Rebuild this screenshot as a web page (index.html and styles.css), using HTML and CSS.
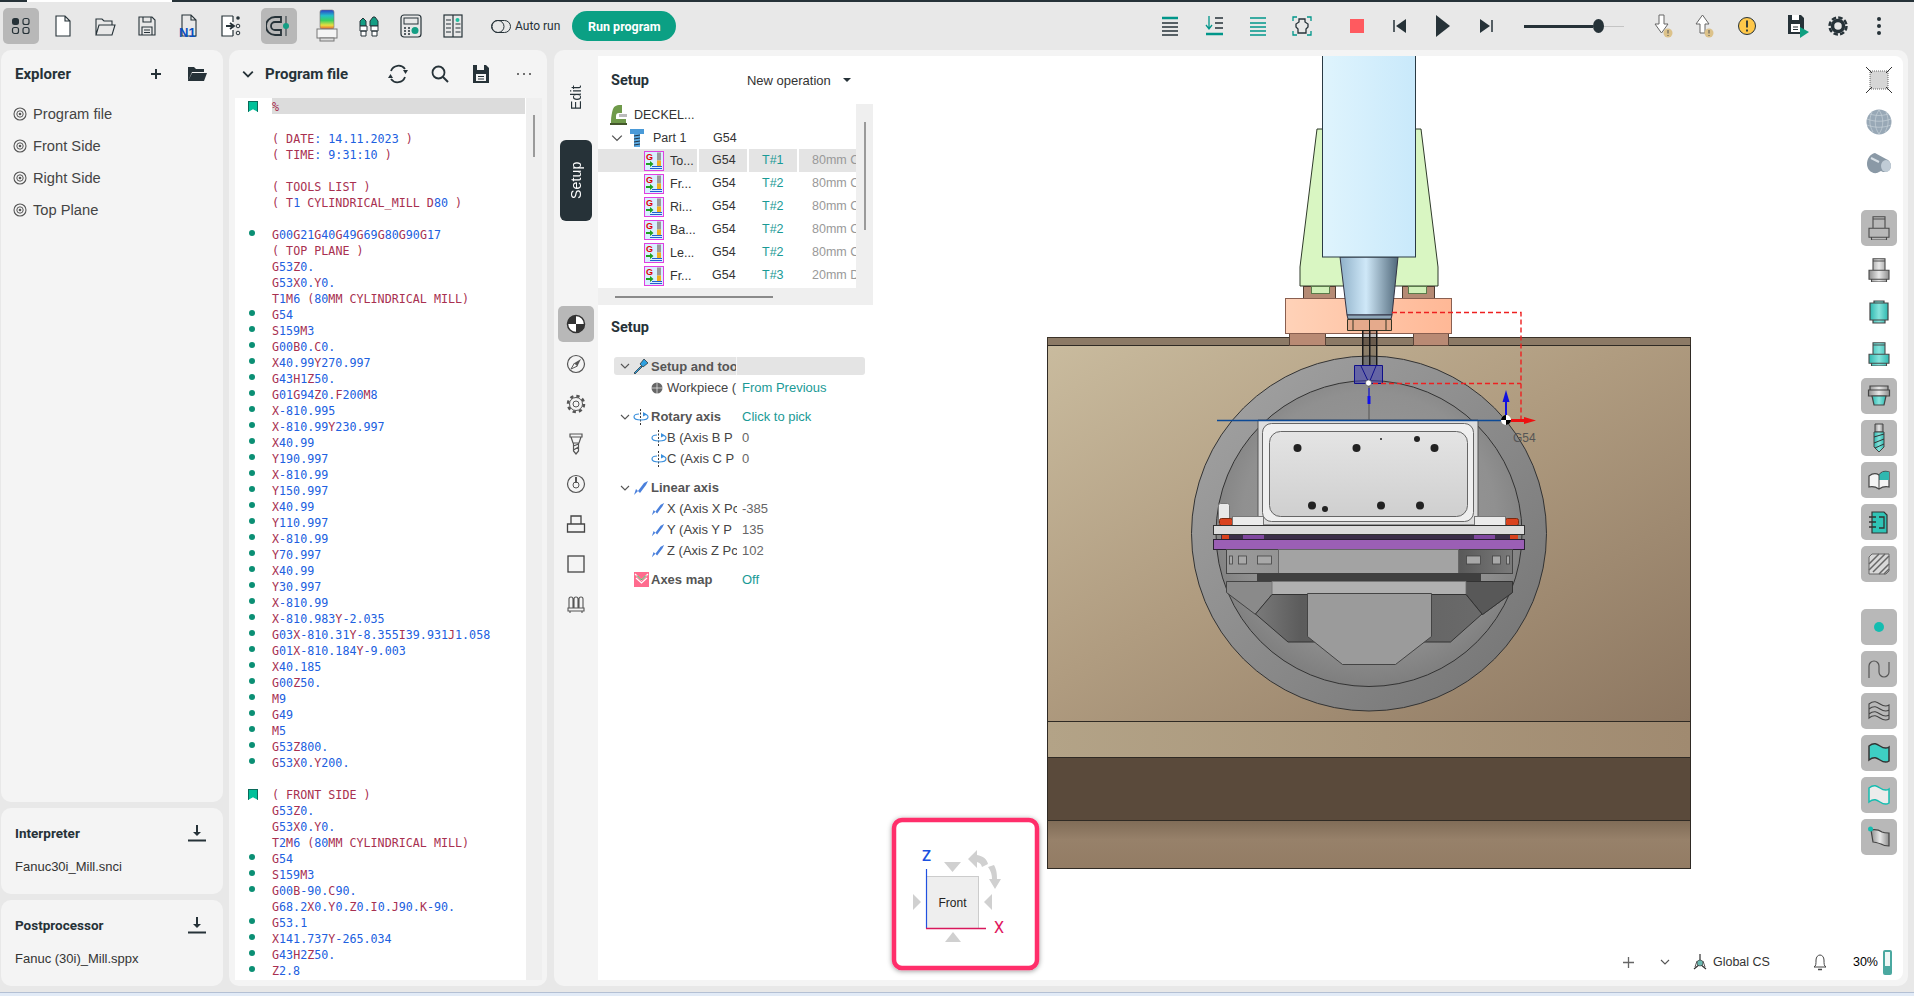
FILE: index.html
```html
<!DOCTYPE html>
<html lang="en">
<head>
<meta charset="utf-8">
<title>Setup</title>
<link rel="stylesheet" href="styles.css">
</head>
<body>
<svg class="defs" width="0" height="0" aria-hidden="true">
  <defs>
    <linearGradient id="gMetal" x1="0" x2="1" y1="0" y2="0"><stop offset="0" stop-color="#8f8f8f"/><stop offset=".5" stop-color="#e8e8e8"/><stop offset="1" stop-color="#8f8f8f"/></linearGradient>
    <linearGradient id="gTeal" x1="0" x2="1" y1="0" y2="0"><stop offset="0" stop-color="#2fb8b0"/><stop offset=".5" stop-color="#86e4dc"/><stop offset="1" stop-color="#2fb8b0"/></linearGradient>
    <linearGradient id="gRainbow" x1="0" x2="0" y1="0" y2="1"><stop offset="0" stop-color="#2a3fc8"/><stop offset=".3" stop-color="#24c0c8"/><stop offset=".55" stop-color="#3ad060"/><stop offset=".8" stop-color="#e8e040"/><stop offset="1" stop-color="#e86030"/></linearGradient>
    <symbol id="stage" viewBox="0 0 24 24"><path d="M6 .7h12v11.600H6zM6 3h12M2 12.300h20v9H2zM4.500 21.300h15V24h-15z" stroke="#4a4a4a" stroke-width="1.100"/></symbol>
    <symbol id="stagebig" viewBox="0 0 24 24"><path d="M7 1h10v2H7zM3 3h18v17H3zM6 20h12v3H6z" stroke="#444" stroke-width="1.200"/></symbol>
    <symbol id="wave" viewBox="0 0 24 24"><path d="M2 5c5-4 8-2 11 0s6 3 9 1v14c-3 2-6 1-9-1s-6-4-11 0z" stroke-width="1.500"/></symbol>
    <symbol id="op" viewBox="0 0 20 20">
      <rect x=".5" y=".5" width="19" height="19" fill="#d8efff" stroke="#e040e0"/>
      <text x="2" y="9" class="op-g">G</text>
      <path d="M2 12h4v-2l3.500 3-3.500 3v-2H2z" fill="#20a020"/>
      <path d="M13 1.500h4v8h-4z" fill="#999"/><path d="M13 9.500h4v6h-4z" fill="#f0b020"/>
      <path d="M8 15.500h10M6 17.500h12" stroke="#2060d0"/>
    </symbol>
    <symbol id="linear" viewBox="0 0 16 16"><path d="M1 15l2-6 2 2 6-8 4-2-2 4-6 8-2-2z" fill="#4a80dc"/></symbol>
    <symbol id="rotary" viewBox="0 0 16 16"><path d="M7.500 0v16" stroke="#333" stroke-dasharray="2 1.500" fill="none"/><path d="M11 5c3 .5 4 2 4 3 0 2-3 3-7 3s-7-1-7-3 2-3 5-3" fill="none" stroke="#3a8fdc" stroke-width="1.200"/><path d="M10 3l4 2.500-4 2z" fill="#3a8fdc"/></symbol>
    <symbol id="eye" viewBox="0 0 14 14"><circle cx="7" cy="7" r="6" fill="none" stroke="#555" stroke-width="1.100"/><circle cx="7" cy="7" r="3.200" fill="none" stroke="#555" stroke-width="1"/><circle cx="7" cy="7" r="1.300" fill="#555"/></symbol>
    <symbol id="download" viewBox="0 0 18 18"><path d="M8 1h2v7h3l-4 4-4-4h3z" fill="#263238"/><path d="M0 16.500h18" stroke="#263238" stroke-width="2"/></symbol>
    <symbol id="chev" viewBox="0 0 10 10"><path d="M1 3l4 4 4-4" fill="none" stroke="#555" stroke-width="1.100"/></symbol>
  </defs>
</svg>

<div class="topline"><span class="tl-a"></span><span class="tl-b"></span><span class="tl-c"></span></div>

<header class="toolbar">
  <div class="tb-btn on"><svg width="20" height="20" viewBox="0 0 20 20"><rect x="1" y="2" width="7" height="7" rx="2.500" fill="#263238"/><rect x="12" y="2.500" width="6" height="6" rx="2" fill="none" stroke="#263238" stroke-width="1.200"/><rect x="1.500" y="11.500" width="6" height="6" rx="2" fill="none" stroke="#263238" stroke-width="1.200"/><rect x="12" y="11.500" width="6" height="6" rx="2" fill="none" stroke="#263238" stroke-width="1.200"/></svg></div>
  <div class="tb-btn"><svg width="24" height="24" viewBox="0 0 24 24"><path d="M5 2h9l5 5v15H5zM14 2v5h5" fill="#fff" stroke="#263238" stroke-width="1.100"/></svg></div>
  <div class="tb-btn"><svg width="24" height="24" viewBox="0 0 24 24"><path d="M3 21V5h6l2 2h8v4M3 21l3-10h16l-3 10z" fill="none" stroke="#263238" stroke-width="1.100"/></svg></div>
  <div class="tb-btn"><svg width="24" height="24" viewBox="0 0 24 24"><path d="M4 3h13l3 3v15H4zM8 3v5h8V3M7 13h10v8H7zM9 16h6M9 18.500h6" fill="none" stroke="#263238" stroke-width="1.100"/></svg></div>
  <div class="tb-btn"><svg width="26" height="26" viewBox="0 0 26 26"><path d="M6 2h9l5 5v16H6zM15 2v5h5" fill="none" stroke="#263238" stroke-width="1.100"/><text x="3" y="24" class="n1">N1</text></svg></div>
  <div class="tb-btn"><svg width="26" height="26" viewBox="0 0 26 26"><path d="M15 3H4v20h11M15 3v6M15 17v6" fill="#fff" stroke="#263238" stroke-width="1.200"/><path d="M8 13h7M12 10l4 3-4 3" fill="none" stroke="#263238" stroke-width="1.800"/><circle cx="20" cy="5" r="1.800" fill="#263238"/><circle cx="20" cy="13" r="1.800" fill="none" stroke="#263238"/><circle cx="20" cy="20" r="1.800" fill="none" stroke="#263238"/></svg></div>
  <div class="tb-btn on gap-l"><svg width="26" height="26" viewBox="0 0 26 26"><path d="M15 4H9a9 9 0 0 0 0 18h6v-5H9a4 4 0 0 1 0-8h6z" fill="none" stroke="#263238" stroke-width="1.800"/><path d="M20 3v20" stroke="#263238"/><circle cx="20" cy="13" r="3" fill="#149e84"/></svg></div>
  <div class="tb-btn gap-l"><svg width="24" height="34" viewBox="0 0 24 34"><rect x="5" y="1" width="14" height="19" rx="2" fill="url(#gRainbow)" stroke="#777" stroke-width=".6"/><rect x="2" y="20" width="20" height="9" fill="#f4f4f4" stroke="#777"/><rect x="5" y="29" width="14" height="3" fill="#ddd" stroke="#777"/></svg></div>
  <div class="tb-btn"><svg width="24" height="24" viewBox="0 0 24 24"><path d="M3 7l3-3 3 3v5H3zM13 7l3-4h2l3 4v5h-8z" fill="#149e84" stroke="#263238"/><path d="M3 12h7v5H3zM14 12h7v5h-7zM4 17h5v5H4zM15 17h5v5h-5z" fill="#fff" stroke="#263238"/></svg></div>
  <div class="tb-btn"><svg width="26" height="26" viewBox="0 0 26 26"><rect x="3" y="2" width="20" height="22" rx="3" fill="none" stroke="#263238" stroke-width="1.200"/><rect x="6" y="5" width="14" height="6" fill="none" stroke="#263238"/><circle cx="17" cy="17.500" r="3.500" fill="#149e84"/><path d="M6 15h2M10 15h2M6 18h2M10 18h2M6 21h2M10 21h2" stroke="#263238" stroke-width="1.500"/></svg></div>
  <div class="tb-btn"><svg width="24" height="26" viewBox="0 0 24 26"><rect x="3" y="2" width="18" height="22" fill="none" stroke="#263238" stroke-width="1.200"/><path d="M12 2v22M5 7h5M5 11h5M5 15h5M5 19h5M14.500 11h5M14.500 15h5M14.500 19h5" stroke="#263238" stroke-width="1.200"/><circle cx="16.500" cy="7" r="2" fill="#1fc0a0"/></svg></div>
  <div class="autorun"><svg width="20" height="13" viewBox="0 0 20 13"><rect x=".5" y=".5" width="19" height="12" rx="6" fill="none" stroke="#263238"/><circle cx="7" cy="6.500" r="6" fill="none" stroke="#263238"/></svg><span>Auto run</span></div>
  <div class="run">Run program</div>

  <div class="tb-right">
    <div class="tb-group g44">
      <svg width="24" height="24" viewBox="0 0 24 24"><path d="M4 4h16" stroke="#00968a" stroke-width="2.500"/><path d="M4 9h16M4 13h16M4 17h16M4 21h16" stroke="#263238" stroke-width="1.300"/></svg>
      <svg width="24" height="24" viewBox="0 0 24 24"><path d="M7 2v12M4 11l3 4 3-4" fill="none" stroke="#00968a" stroke-width="1.300"/><path d="M13 4h8M13 9h8M13 14h8" stroke="#263238" stroke-width="1.300"/><path d="M4 20h17" stroke="#00968a" stroke-width="2.500"/></svg>
      <svg width="24" height="24" viewBox="0 0 24 24"><path d="M4 4h16M4 9h16M4 13h16M4 17h16M4 21h16" stroke="#00968a" stroke-width="1.500"/></svg>
      <svg width="24" height="24" viewBox="0 0 24 24"><path d="M3 7V3h4M17 3h4v4M21 17v4h-4M7 21H3v-4" fill="none" stroke="#00968a" stroke-width="1.300"/><path d="M9 5h6v3l3 2v3l-2 2v4H8v-4l-2-2v-3l3-2z" fill="none" stroke="#263238" stroke-width="1.300"/></svg>
    </div>
    <div class="tb-group g19 play-group">
      <svg width="24" height="24" viewBox="0 0 24 24"><rect x="5" y="5" width="14" height="14" fill="#ff5a5f"/></svg>
      <svg width="24" height="24" viewBox="0 0 24 24"><path d="M6 6v12" stroke="#263238" stroke-width="1.500"/><path d="M18 5v14L8 12z" fill="#263238"/></svg>
      <svg width="24" height="24" viewBox="0 0 24 24"><path d="M5 1v22l14-11z" fill="#263238"/></svg>
      <svg width="24" height="24" viewBox="0 0 24 24"><path d="M18 6v12" stroke="#263238" stroke-width="1.500"/><path d="M6 5v14l10-7z" fill="#263238"/></svg>
    </div>
    <div class="slider"><i class="sl-fill"></i><i class="sl-knob"></i><i class="sl-rest"></i></div>
    <div class="tb-group g17 alerts">
      <svg width="24" height="26" viewBox="0 0 24 26"><path d="M8 2h5v9h4l-6.500 9L4 11h4z" fill="#fff" stroke="#666"/><circle cx="17" cy="20" r="4.500" fill="#dcc28a"/><path d="M17 17v3.500M17 22v1" stroke="#555"/></svg>
      <svg width="24" height="26" viewBox="0 0 24 26"><path d="M8 20h5v-9h4L10.500 2 4 11h4z" fill="#fff" stroke="#666"/><circle cx="17" cy="20" r="4.500" fill="#dcc28a"/><path d="M17 17v3.500M17 22v1" stroke="#555"/></svg>
    </div>
    <svg class="warn" width="24" height="24" viewBox="0 0 24 24"><ellipse cx="12" cy="12" rx="8.500" ry="8.500" fill="#ffc84a" stroke="#263238"/><path d="M12 6.500v7M12 15.500v2" stroke="#263238" stroke-width="1.800"/></svg>
    <div class="tb-group g17 sys">
      <svg width="24" height="26" viewBox="0 0 24 26"><path d="M3 2h13l3 3v16H3z" fill="#263238"/><path d="M7 2h7v5H7zM6 11h9v8H6z" fill="#fff"/><path d="M8 14h5M8 16.500h5" stroke="#263238"/><path d="M15 14l9 5-9 6z" fill="#0f9f80"/></svg>
      <svg width="24" height="24" viewBox="0 0 24 24"><circle cx="12" cy="12" r="5.500" fill="none" stroke="#263238" stroke-width="3.500"/><circle cx="12" cy="12" r="8.500" fill="none" stroke="#263238" stroke-width="2.500" stroke-dasharray="4.500 2.170"/></svg>
      <svg width="24" height="24" viewBox="0 0 24 24"><circle cx="12" cy="5" r="2" fill="#263238"/><circle cx="12" cy="12" r="2" fill="#263238"/><circle cx="12" cy="19" r="2" fill="#263238"/></svg>
    </div>
  </div>
</header>

<main class="main">
  <div class="left-col">
    <section class="panel explorer">
      <div class="explorer-head"><h2 class="title">Explorer</h2>
        <svg class="plus" width="12" height="12" viewBox="0 0 12 12"><path d="M6 1v10M1 6h10" stroke="#263238" stroke-width="2"/></svg>
        <svg class="folder" width="20" height="16" viewBox="0 0 20 16"><path d="M1 15V1h6l2 2h8v3H5zM1 15l4-8h15l-3 8z" fill="#263238"/></svg>
      </div>
      <ul class="ex-list">
        <li><svg width="14" height="14"><use href="#eye"/></svg>Program file</li>
        <li><svg width="14" height="14"><use href="#eye"/></svg>Front Side</li>
        <li><svg width="14" height="14"><use href="#eye"/></svg>Right Side</li>
        <li><svg width="14" height="14"><use href="#eye"/></svg>Top Plane</li>
      </ul>
    </section>
    <section class="panel side-card">
      <div class="card-head"><h3 class="title small">Interpreter</h3><svg width="18" height="18"><use href="#download"/></svg></div>
      <div class="card-val">Fanuc30i_Mill.snci</div>
    </section>
    <section class="panel side-card">
      <div class="card-head"><h3 class="title small">Postprocessor</h3><svg width="18" height="18"><use href="#download"/></svg></div>
      <div class="card-val">Fanuc (30i)_Mill.sppx</div>
    </section>
  </div>

  <section class="panel program">
    <div class="prog-head">
      <svg class="prog-chev" width="12" height="12" viewBox="0 0 10 10"><path d="M1 3l4 4 4-4" fill="none" stroke="#263238" stroke-width="1.500"/></svg>
      <h2 class="title">Program file</h2>
      <svg class="pi-1" width="22" height="22" viewBox="0 0 22 22"><path d="M4 8a8 8 0 0 1 14-2M18 14a8 8 0 0 1-14 2" fill="none" stroke="#263238" stroke-width="1.800"/><path d="M16 7h5l-2.500 4zM6 15H1l2.500-4z" fill="#263238"/></svg>
      <svg class="pi-2" width="20" height="20" viewBox="0 0 20 20"><circle cx="8.500" cy="8.500" r="6" fill="none" stroke="#263238" stroke-width="1.800"/><path d="M13 13l5 5" stroke="#263238" stroke-width="2"/></svg>
      <svg class="pi-3" width="18" height="20" viewBox="0 0 18 20"><path d="M1 1h13l3 3v15H1z" fill="#263238"/><path d="M5 1h7v5H5zM4 10h10v7H4z" fill="#f4f4f4"/><path d="M6 12.500h6M6 15h6" stroke="#263238"/></svg>
      <svg class="pi-4" width="16" height="4" viewBox="0 0 16 4"><circle cx="2" cy="2" r="1" fill="#444"/><circle cx="8" cy="2" r="1" fill="#444"/><circle cx="14" cy="2" r="1" fill="#444"/></svg>
    </div>
    <div class="code-wrap">
      <div class="code" id="code">
        <div class="ln hl bm"><code>%</code></div>
        <div class="ln"><code></code></div>
        <div class="ln"><code>( DATE: 14.11.2023 )</code></div>
        <div class="ln"><code>( TIME: 9:31:10 )</code></div>
        <div class="ln"><code></code></div>
        <div class="ln"><code>( TOOLS LIST )</code></div>
        <div class="ln"><code>( T1 CYLINDRICAL_MILL D80 )</code></div>
        <div class="ln"><code></code></div>
        <div class="ln dot"><code>G00G21G40G49G69G80G90G17</code></div>
        <div class="ln"><code>( TOP PLANE )</code></div>
        <div class="ln"><code>G53Z0.</code></div>
        <div class="ln"><code>G53X0.Y0.</code></div>
        <div class="ln"><code>T1M6 (80MM CYLINDRICAL MILL)</code></div>
        <div class="ln dot"><code>G54</code></div>
        <div class="ln dot"><code>S159M3</code></div>
        <div class="ln dot"><code>G00B0.C0.</code></div>
        <div class="ln dot"><code>X40.99Y270.997</code></div>
        <div class="ln dot"><code>G43H1Z50.</code></div>
        <div class="ln dot"><code>G01G94Z0.F200M8</code></div>
        <div class="ln dot"><code>X-810.995</code></div>
        <div class="ln dot"><code>X-810.99Y230.997</code></div>
        <div class="ln dot"><code>X40.99</code></div>
        <div class="ln dot"><code>Y190.997</code></div>
        <div class="ln dot"><code>X-810.99</code></div>
        <div class="ln dot"><code>Y150.997</code></div>
        <div class="ln dot"><code>X40.99</code></div>
        <div class="ln dot"><code>Y110.997</code></div>
        <div class="ln dot"><code>X-810.99</code></div>
        <div class="ln dot"><code>Y70.997</code></div>
        <div class="ln dot"><code>X40.99</code></div>
        <div class="ln dot"><code>Y30.997</code></div>
        <div class="ln dot"><code>X-810.99</code></div>
        <div class="ln dot"><code>X-810.983Y-2.035</code></div>
        <div class="ln dot"><code>G03X-810.31Y-8.355I39.931J1.058</code></div>
        <div class="ln dot"><code>G01X-810.184Y-9.003</code></div>
        <div class="ln dot"><code>X40.185</code></div>
        <div class="ln dot"><code>G00Z50.</code></div>
        <div class="ln dot"><code>M9</code></div>
        <div class="ln dot"><code>G49</code></div>
        <div class="ln dot"><code>M5</code></div>
        <div class="ln dot"><code>G53Z800.</code></div>
        <div class="ln dot"><code>G53X0.Y200.</code></div>
        <div class="ln"><code></code></div>
        <div class="ln bm"><code>( FRONT SIDE )</code></div>
        <div class="ln"><code>G53Z0.</code></div>
        <div class="ln"><code>G53X0.Y0.</code></div>
        <div class="ln"><code>T2M6 (80MM CYLINDRICAL MILL)</code></div>
        <div class="ln dot"><code>G54</code></div>
        <div class="ln dot"><code>S159M3</code></div>
        <div class="ln dot"><code>G00B-90.C90.</code></div>
        <div class="ln"><code>G68.2X0.Y0.Z0.I0.J90.K-90.</code></div>
        <div class="ln dot"><code>G53.1</code></div>
        <div class="ln dot"><code>X141.737Y-265.034</code></div>
        <div class="ln dot"><code>G43H2Z50.</code></div>
        <div class="ln dot"><code>Z2.8</code></div>
      </div>
      <div class="code-track"><i class="code-thumb"></i></div>
    </div>
  </section>

  <section class="panel setup">
    <nav class="rail">
      <div class="rail-tab">Edit</div>
      <div class="rail-tab active">Setup</div>
      <div class="rail-icons">
        <div class="rail-ic on"><svg width="20" height="20" viewBox="0 0 20 20"><circle cx="10" cy="10" r="8.500" fill="#fff" stroke="#333" stroke-width="1.500"/><path d="M10 10V1.500A8.500 8.500 0 0 0 1.500 10zM10 10v8.500a8.500 8.500 0 0 0 8.500-8.500z" fill="#333"/></svg></div>
        <div class="rail-ic"><svg width="20" height="20" viewBox="0 0 20 20"><circle cx="10" cy="10" r="8.500" fill="none" stroke="#555" stroke-width="1.200"/><path d="M15 5l-3.500 7-3 -3z" fill="#555"/><path d="M5 15l3.500-6 3 3z" fill="none" stroke="#555"/></svg></div>
        <div class="rail-ic"><svg width="20" height="20" viewBox="0 0 20 20"><circle cx="10" cy="10" r="3" fill="none" stroke="#555"/><circle cx="10" cy="10" r="6.500" fill="none" stroke="#555"/><circle cx="10" cy="10" r="8" fill="none" stroke="#555" stroke-width="2.500" stroke-dasharray="3.300 3"/></svg></div>
        <div class="rail-ic"><svg width="16" height="22" viewBox="0 0 16 22"><path d="M2 1h12v3H2zM3 4h10l-2 6H5zM5.500 10h5v8l-2.500 3-2.500-3zM5.500 13l5-2M5.500 17l5-3" fill="none" stroke="#555" stroke-width="1.200"/></svg></div>
        <div class="rail-ic"><svg width="20" height="20" viewBox="0 0 20 20"><circle cx="10" cy="10" r="8.500" fill="none" stroke="#555" stroke-width="1.200"/><circle cx="10" cy="11" r="3" fill="none" stroke="#555"/><path d="M9 9V3h2v6" fill="#555"/></svg></div>
        <div class="rail-ic"><svg width="20" height="20" viewBox="0 0 20 20"><path d="M5 2h10v8H5zM1.500 10h17v8h-17z" fill="none" stroke="#444" stroke-width="1.300"/></svg></div>
        <div class="rail-ic"><svg width="20" height="20" viewBox="0 0 20 20"><rect x="2" y="2" width="16" height="16" fill="none" stroke="#444" stroke-width="1.300"/></svg></div>
        <div class="rail-ic"><svg width="20" height="20" viewBox="0 0 20 20"><path d="M3 5a2 2 0 0 1 4 0v9H3zM8 5a2 2 0 0 1 4 0v9H8zM13 5a2 2 0 0 1 4 0v9h-4zM2 14h16v3H2zM4 17v2M16 17v2" fill="none" stroke="#555" stroke-width="1.100"/></svg></div>
      </div>
    </nav>
    <div class="work">
      <div class="form-col">
        <div class="form-head"><h3 class="title setup-t">Setup</h3><span class="newop">New operation</span><i class="caret"></i></div>
        <div class="tree-box">
          <div class="tree-body">
            <div class="tree">
              <div class="t-row machine"><svg width="17" height="20" viewBox="0 0 17 20"><path d="M1 19V16c0-4 1-9 2-12 1-3 4-4 6-4h3v8H9c-2 0-3 1-3 3v3h10v5H1z" fill="#6f9a4a"/><rect x="9" y="9" width="8" height="3" fill="#bbb"/><rect x="0" y="18" width="17" height="2" fill="#44572c"/></svg><span>DECKEL...</span></div>
              <div class="t-row part">
                <svg width="12" height="12"><use href="#chev"/></svg>
                <svg width="14" height="20" viewBox="0 0 14 20"><path d="M0 1h14v5H0z" fill="#4a9ad8"/><path d="M4 6h6v13H4z" fill="#5aa8e0"/><path d="M4 8l6-1M4 11l6-1M4 14l6-1M4 17l6-1" stroke="#234"/></svg>
                <span class="p-name">Part 1</span><span class="p-g">G54</span>
              </div>
              <div class="op sel"><div class="c-name"><svg width="20" height="20"><use href="#op"/></svg><span>To...</span></div><div class="c">G54</div><div class="c teal">T#1</div><div class="c gray">80mm C</div></div>
              <div class="op"><div class="c-name"><svg width="20" height="20"><use href="#op"/></svg><span>Fr...</span></div><div class="c">G54</div><div class="c teal">T#2</div><div class="c gray">80mm C</div></div>
              <div class="op"><div class="c-name"><svg width="20" height="20"><use href="#op"/></svg><span>Ri...</span></div><div class="c">G54</div><div class="c teal">T#2</div><div class="c gray">80mm C</div></div>
              <div class="op"><div class="c-name"><svg width="20" height="20"><use href="#op"/></svg><span>Ba...</span></div><div class="c">G54</div><div class="c teal">T#2</div><div class="c gray">80mm C</div></div>
              <div class="op"><div class="c-name"><svg width="20" height="20"><use href="#op"/></svg><span>Le...</span></div><div class="c">G54</div><div class="c teal">T#2</div><div class="c gray">80mm C</div></div>
              <div class="op"><div class="c-name"><svg width="20" height="20"><use href="#op"/></svg><span>Fr...</span></div><div class="c">G54</div><div class="c teal">T#3</div><div class="c gray">20mm D</div></div>
            </div>
            <div class="v-track"><i class="v-thumb"></i></div>
          </div>
          <div class="h-track"><i class="h-thumb"></i></div>
        </div>
        <h3 class="title setup-t props-t">Setup</h3>
        <div class="props">
          <div class="p-row head sel-row"><div class="p-n"><svg width="10" height="10"><use href="#chev"/></svg><svg class="p-ic" width="16" height="16" viewBox="0 0 16 16"><path d="M1 15l7-7 1 1-7 7z" fill="#2ea0e0" stroke="#111" stroke-width=".6"/><path d="M7 6l4-5 4 4-5 4z" fill="#2ea0e0" stroke="#111" stroke-width=".6"/></svg><span>Setup and too</span></div><div class="p-v"></div></div>
          <div class="p-row child wp"><div class="p-n"><svg class="p-ic" width="12" height="12" viewBox="0 0 12 12"><circle cx="6" cy="6" r="5.500" fill="#666"/><path d="M6 0v12M0 6h12" stroke="#eee" stroke-width=".7"/></svg><span>Workpiece (</span></div><div class="p-v teal">From Previous</div></div>
          <div class="p-row head sp"><div class="p-n"><svg width="10" height="10"><use href="#chev"/></svg><svg class="p-ic" width="16" height="16"><use href="#rotary"/></svg><span>Rotary axis</span></div><div class="p-v teal">Click to pick</div></div>
          <div class="p-row child rot"><div class="p-n"><svg class="p-ic" width="16" height="16"><use href="#rotary"/></svg><span>B (Axis B P</span></div><div class="p-v">0</div></div>
          <div class="p-row child rot"><div class="p-n"><svg class="p-ic" width="16" height="16"><use href="#rotary"/></svg><span>C (Axis C P</span></div><div class="p-v">0</div></div>
          <div class="p-row head sp"><div class="p-n"><svg width="10" height="10"><use href="#chev"/></svg><svg class="p-ic" width="16" height="16"><use href="#linear"/></svg><span>Linear axis</span></div><div class="p-v"></div></div>
          <div class="p-row child"><div class="p-n"><svg class="p-ic" width="14" height="14"><use href="#linear"/></svg><span>X (Axis X Pc</span></div><div class="p-v">-385</div></div>
          <div class="p-row child"><div class="p-n"><svg class="p-ic" width="14" height="14"><use href="#linear"/></svg><span>Y (Axis Y P</span></div><div class="p-v">135</div></div>
          <div class="p-row child"><div class="p-n"><svg class="p-ic" width="14" height="14"><use href="#linear"/></svg><span>Z (Axis Z Pc</span></div><div class="p-v">102</div></div>
          <div class="p-row head sp axes"><div class="p-n"><svg class="p-ic" width="15" height="15" viewBox="0 0 15 15"><rect width="15" height="15" fill="#ff6b8e"/><path d="M1 2l6.500 6L14 2M2 6l5.500 5L13 6" fill="none" stroke="#fff" stroke-width="1.200"/><path d="M3 3.500l4.500 4.500L12 3.500" fill="none" stroke="#2a9a3a"/></svg><span>Axes map</span></div><div class="p-v teal">Off</div></div>
        </div>
      </div>

      <div class="viewport">
        <svg class="scene" width="1030" height="924" viewBox="873 56 1030 924">
          <defs>
            <linearGradient id="sand" x1="0" y1="0" x2="1" y2="1"><stop offset="0" stop-color="#c9bb9e"/><stop offset=".45" stop-color="#b09c80"/><stop offset="1" stop-color="#8d7761"/></linearGradient>
            <linearGradient id="band" x1="0" y1="0" x2="1" y2="0"><stop offset="0" stop-color="#b3a387"/><stop offset="1" stop-color="#a08a70"/></linearGradient>
            <linearGradient id="foot" x1="0" y1="0" x2="0" y2="1"><stop offset="0" stop-color="#806c57"/><stop offset=".4" stop-color="#97816a"/><stop offset="1" stop-color="#937c64"/></linearGradient>
            <linearGradient id="ring" x1="0" y1="0" x2="1" y2="1"><stop offset="0" stop-color="#a5a5a5"/><stop offset="1" stop-color="#727272"/></linearGradient>
            <radialGradient id="inner" cx=".5" cy=".45" r=".55"><stop offset="0" stop-color="#9c9c9c"/><stop offset=".75" stop-color="#909090"/><stop offset="1" stop-color="#7e7e7e"/></radialGradient>
            <linearGradient id="col" x1="0" x2="1" y1="0" y2="0"><stop offset="0" stop-color="#dff4fd"/><stop offset="1" stop-color="#c9e9fb"/></linearGradient>
            <linearGradient id="taper" x1="0" x2="1" y1="0" y2="0"><stop offset="0" stop-color="#8fb0c8"/><stop offset=".45" stop-color="#cfe8f8"/><stop offset="1" stop-color="#50687a"/></linearGradient>
            <linearGradient id="plate" x1="0" x2="1" y1="0" y2="0"><stop offset="0" stop-color="#ffd2b8"/><stop offset="1" stop-color="#ffb896"/></linearGradient>
            <linearGradient id="panelg" x1="0" y1="0" x2="0" y2="1"><stop offset="0" stop-color="#e4e4e4"/><stop offset="1" stop-color="#cfcfcf"/></linearGradient>
            <linearGradient id="dark" x1="0" y1="0" x2="1" y2="0"><stop offset="0" stop-color="#9a9a9a"/><stop offset=".5" stop-color="#8a8a8a"/><stop offset=".82" stop-color="#5a5a5a"/><stop offset="1" stop-color="#7a7a7a"/></linearGradient>
            <linearGradient id="wedge" x1="0" y1="0" x2="1" y2="0"><stop offset="0" stop-color="#7a7a7a"/><stop offset=".2" stop-color="#5c5c5c"/><stop offset="1" stop-color="#6a6a6a"/></linearGradient>
            <filter id="shadow" x="-15%" y="-15%" width="130%" height="130%"><feDropShadow dx="0" dy="1" stdDeviation="2.500" flood-color="#000" flood-opacity=".4"/></filter>
          </defs>

          <rect x="1047.500" y="337.500" width="643" height="9" fill="#8c7a66" stroke="#3b3228"/>
          <rect x="1047.500" y="345.500" width="643" height="376" fill="url(#sand)" stroke="#2f2a24"/>
          <rect x="1047.500" y="721.500" width="643" height="36" fill="url(#band)" stroke="#2f2a24"/>
          <rect x="1047.500" y="757.500" width="643" height="63" fill="#5a4a3b" stroke="#2f2a24"/>
          <rect x="1047.500" y="820.500" width="643" height="48" fill="url(#foot)" stroke="#2f2a24"/>

          <rect x="1289.500" y="333.500" width="36" height="12" fill="#b98a74" stroke="#5a4438"/>
          <rect x="1413.500" y="333.500" width="35" height="12" fill="#b98a74" stroke="#5a4438"/>

          <circle cx="1369" cy="533.500" r="177.500" fill="url(#ring)" stroke="#333"/>
          <circle cx="1369" cy="533.500" r="153" fill="url(#inner)" stroke="#333"/>

          <path d="M1369 384v36" stroke="#555"/>

          <path d="M1258 420h220v105h-220z" fill="#dedede" stroke="#555"/>
          <rect x="1262.500" y="423.500" width="211" height="98" rx="9" fill="#efefef" stroke="#666"/>
          <rect x="1269.500" y="431.500" width="198" height="85" rx="11" fill="url(#panelg)" stroke="#666"/>
          <g fill="#222">
            <circle cx="1297.500" cy="448" r="4"/><circle cx="1356.500" cy="448" r="4"/><circle cx="1434.500" cy="448" r="4"/><circle cx="1417" cy="439" r="3"/><circle cx="1381" cy="439" r="1"/>
            <circle cx="1312" cy="505.500" r="4"/><circle cx="1325" cy="509" r="3"/><circle cx="1381" cy="505.500" r="4"/><circle cx="1420" cy="505.500" r="4"/>
          </g>
          <rect x="1218.500" y="503.500" width="11" height="22" rx="2" fill="#e8e8e8" stroke="#777"/>
          <rect x="1219.500" y="518.500" width="13" height="7" rx="2" fill="#d9421e" stroke="#7a2a10"/>
          <rect x="1505.500" y="518.500" width="13" height="7" rx="2" fill="#d9421e" stroke="#7a2a10"/>
          <rect x="1232.500" y="516.500" width="31" height="9" fill="#ebebeb" stroke="#777"/>
          <rect x="1474.500" y="516.500" width="31" height="9" fill="#ebebeb" stroke="#777"/>

          <rect x="1221" y="534" width="296" height="5" fill="#3c2f4a"/>
          <rect x="1243" y="534" width="21" height="5" fill="#8047a0"/><rect x="1474" y="534" width="21" height="5" fill="#8047a0"/>
          <rect x="1222" y="534" width="7" height="5" fill="#d9421e"/><rect x="1510" y="534" width="8" height="5" fill="#d9421e"/>
          <rect x="1213.500" y="525.500" width="311" height="9" fill="#dcdcdc" stroke="#333"/>
          <rect x="1213.500" y="539.500" width="311" height="10" fill="#9b5fb5" stroke="#2a2032"/>

          <rect x="1226.500" y="549.500" width="286" height="24" fill="url(#dark)" stroke="#444"/>
          <rect x="1278.500" y="549.500" width="180" height="24" fill="#a3a3a3" stroke="#666"/>
          <g fill="#a8a8a8" stroke="#444" stroke-width=".8">
            <rect x="1229.500" y="556" width="3" height="8"/><rect x="1238.500" y="556" width="8" height="8"/><rect x="1257.500" y="556" width="14" height="8"/>
            <rect x="1466.500" y="556" width="14" height="8"/><rect x="1492.500" y="556" width="8" height="8"/><rect x="1506.500" y="556" width="3" height="8"/>
          </g>
          <rect x="1257" y="573" width="224" height="8" fill="#3f3f3f"/>
          <path d="M1226.500 581.500h286v11l-30 22-16-20H1272l-16.500 20-29-22z" fill="#8a8a8a" stroke="#444"/>
          <path d="M1466 581.500h46.500v11l-30 22-16.500-20z" fill="#585858" stroke="#333"/>
          <path d="M1272 581.500h194v13H1272z" fill="#b0b0b0" stroke="#777"/>
          <path d="M1272 594.500l-16.500 19.500 32.500 28h162.500l31.500-28-16-19.500z" fill="url(#wedge)" stroke="#333"/>
          <path d="M1307.500 593.500h124v43l-36 28h-53l-35-28z" fill="#9b9b9b" stroke="#444"/>

          <path d="M1317 129h104l17 138v19h-138v-19z" fill="#d9f6c2" stroke="#2f3a2a"/>
          <rect x="1303.500" y="286.500" width="32" height="12" fill="#b58a74" stroke="#4d3a30"/>
          <rect x="1402.500" y="286.500" width="32" height="12" fill="#b58a74" stroke="#4d3a30"/>
          <rect x="1311.500" y="286.500" width="18" height="7" fill="#d0f0b8" stroke="#5a7a4a"/>
          <rect x="1408.500" y="286.500" width="18" height="7" fill="#d0f0b8" stroke="#5a7a4a"/>
          <rect x="1285.500" y="298.500" width="166" height="35" fill="url(#plate)" stroke="#8a5f50"/>
          <path d="M1340 257h58l-6 58h-45z" fill="url(#taper)" stroke="#334"/>
          <path d="M1347 315h45l-1 4h-43z" fill="#8ea7b8" stroke="#334"/>
          <rect x="1322.500" y="40" width="93" height="217" fill="url(#col)" stroke="#2a3a44"/>
          <path d="M1347.500 319.500h44v11h-44zM1353 319.500v11M1386 319.500v11M1369.500 319.500v11" fill="#e5aa8c" stroke="#332"/>
          <path d="M1362 330h1.500v35H1362zM1369 330h1.500v35H1369zM1376 330h1.500v35H1376z" fill="#222"/>
          <path d="M1362 330h15v35h-15z" fill="#000" fill-opacity=".25"/>
          <path d="M1354.500 365.500h28v18h-28z" fill="#3c3cb0" fill-opacity=".55" stroke="#10108a"/>
          <path d="M1361 366l8 17 7-17" fill="none" stroke="#10108a"/>

          <path d="M1392 312.500h129V420M1373 383.500h148" fill="none" stroke="#ee2020" stroke-width="1.400" stroke-dasharray="5 3"/>
          <circle cx="1368.500" cy="383" r="3" fill="#fff" stroke="#333" stroke-width=".5"/>
          <path d="M1369 388v8" stroke="#1010ee" stroke-width="1"/><path d="M1369 396v8" stroke="#1010ee" stroke-width="3"/>
          <path d="M1217 420.500h285" stroke="#0c4a96" stroke-width="1.500"/>
          <path d="M1506 416v-18" stroke="#1010e0" stroke-width="2"/><path d="M1502.500 402l3.500-12 3.500 12z" fill="#1010e0"/>
          <path d="M1510 420.500h18" stroke="#ee1010" stroke-width="3"/><path d="M1524 417l12 3.500-12 3.500z" fill="#ee1010"/>
          <circle cx="1506" cy="420" r="5" fill="#fff"/>
          <path d="M1506 420v-5a5 5 0 0 0-5 5zM1506 420v5a5 5 0 0 0 5-5z" fill="#000"/>
          <text x="1513" y="442" class="g54">G54</text>

          <g filter="url(#shadow)"><rect x="894" y="820" width="143" height="148" rx="8" fill="#fff" stroke="#ff2d6b" stroke-width="4.500"/></g>
          <text x="922" y="861" class="axis-z">Z</text>
          <rect x="926.500" y="876.500" width="52" height="52" fill="#eee" stroke="#ccc"/>
          <path d="M926.500 869v59.500" stroke="#2050e0" stroke-width="1.200"/>
          <path d="M926 928.500h60" stroke="#d8185c" stroke-width="1.500"/>
          <text x="994" y="933" class="axis-x">X</text>
          <text x="952.500" y="907" class="cube-t">Front</text>
          <g fill="#d0d0d0">
            <path d="M944 862h17l-8.500 10z"/><path d="M945 942h16l-8-10z"/><path d="M913 894v16l8-8z"/><path d="M992 894v16l-8-8z"/>
            <path d="M968 859l9-9v5c6 1 10 4 11 9l-6 3c-1-3-2-4-5-5v6z"/>
            <path d="M988 867l6-2c3 5 3 11 3 14h4l-6 10-6-10h3c0-4-1-8-4-12z"/>
          </g>
        </svg>

        <div class="right-rail">
          <div class="ri"><svg width="28" height="28" viewBox="0 0 28 28"><rect x="5" y="5" width="18" height="18" fill="#d6d6d6" stroke="#666" stroke-dasharray="1 1"/><path d="M1 1l6 6M27 1l-6 6M1 27l6-6M27 27l-6-6" stroke="#333"/></svg></div>
          <div class="ri"><svg width="26" height="26" viewBox="0 0 26 26"><circle cx="13" cy="13" r="12.500" fill="#98a8b6"/><path d="M1 10c8 3 16 3 24 0M1 16c8 3 16 3 24 0M4 5c6 2 12 2 18 0M13 1c-5 7-5 17 0 24M13 1c5 7 5 17 0 24M6 3c-3 7-3 13 1 20M20 3c3 7 3 13-1 20" fill="none" stroke="#cdd6dd" stroke-width=".6"/></svg></div>
          <div class="ri"><svg width="26" height="24" viewBox="0 0 26 24"><path d="M1 12c0-5 3-10 8-11l11 6c3 1 5 4 5 7s-3 6-6 6c-1 0-3 0-4-1l-4 2C5 22 1 17 1 12z" fill="#8a99a6"/><ellipse cx="20" cy="14" rx="5" ry="6" fill="#c0ccd6"/><path d="M5 6l8 4" stroke="#d8e0e6" stroke-width="2"/></svg></div>
          <div class="ri on group"><svg class="st-none" width="24" height="24"><use href="#stage"/></svg></div>
          <div class="ri"><svg class="st-metal" width="24" height="24"><use href="#stage"/></svg></div>
          <div class="ri"><svg class="st-teal" width="24" height="24"><use href="#stagebig"/></svg></div>
          <div class="ri"><svg class="st-teal" width="24" height="24"><use href="#stage"/></svg></div>
          <div class="ri on"><svg width="24" height="24" viewBox="0 0 24 24"><path d="M3 2h18v4H3zM1.500 6h21v6h-21z" fill="url(#gMetal)" stroke="#444" stroke-width="1.200"/><path d="M5 12h14l-2 9H7z" fill="url(#gTeal)" stroke="#444" stroke-width="1.200"/></svg></div>
          <div class="ri on"><svg width="14" height="30" viewBox="0 0 14 30"><path d="M3 1h8v8H3z" fill="url(#gMetal)" stroke="#444"/><path d="M2 9h10v15l-5 5-5-5z" fill="url(#gTeal)" stroke="#444"/><path d="M2 14l10-3M2 20l10-4M3 25l9-4" stroke="#333" fill="none"/></svg></div>
          <div class="ri on"><svg width="24" height="24" viewBox="0 0 24 24"><path d="M2 19V8c4-3 7-3 10-1 3-4 7-4 10-3v15c-4-1-7 0-10 2-3-2-6-3-10-2z" fill="#f4f4f4" stroke="#444" stroke-width="1.200"/><path d="M12 7c3-4 7-4 10-3v8H12z" fill="#2fb8b0"/><path d="M12 7v14" stroke="#444"/></svg></div>
          <div class="ri on"><svg width="24" height="24" viewBox="0 0 24 24"><path d="M5 2h12l3 3v18H5z" fill="#2fc4b6" stroke="#333" stroke-width="1.200"/><path d="M2 7h7M2 12h7M2 17h7M12 7h5v11h-5" fill="none" stroke="#333" stroke-width="1.300"/></svg></div>
          <div class="ri on"><svg width="24" height="24" viewBox="0 0 24 24"><path d="M2 5l3-3h17v17l-3 3H2z" fill="#d8d8d8" stroke="#666"/><path d="M2 12L12 2M2 18L18 2M6 20L22 4M12 22L22 12M17 22l5-5" stroke="#666" stroke-width="1.500"/></svg></div>
          <div class="ri on group2"><svg width="10" height="10" viewBox="0 0 10 10"><circle cx="5" cy="5" r="5" fill="#14bdb0"/></svg></div>
          <div class="ri on"><svg width="24" height="24" viewBox="0 0 24 24"><path d="M2 21V9a5 5 0 0 1 10 0v6a5 5 0 0 0 10 0V5" fill="none" stroke="#555" stroke-width="1.200"/></svg></div>
          <div class="ri on"><svg class="wv-lines" width="24" height="24" viewBox="0 0 24 24"><path d="M2 5c5-4 8-2 11 0s6 3 9 1v14c-3 2-6 1-9-1s-6-4-11 0zM2 10c5-4 8-2 11 0s6 3 9 1M2 15c5-4 8-2 11 0s6 3 9 1"/></svg></div>
          <div class="ri on"><svg class="wv-teal" width="24" height="24"><use href="#wave"/></svg></div>
          <div class="ri on"><svg class="wv-edge" width="24" height="24"><use href="#wave"/></svg></div>
          <div class="ri on"><svg width="24" height="24" viewBox="0 0 24 24"><path d="M4 5c5-1 8 0 11 2 2 1 5 1 7 1v13c-3 0-5 0-8-2-3-1-6-2-8-2z" fill="url(#gMetal)" stroke="#444" stroke-width="1.200"/><circle cx="3.500" cy="4" r="2.500" fill="#14bdb0"/></svg></div>
        </div>

        <div class="status">
          <svg class="st-plus" width="13" height="13" viewBox="0 0 13 13"><path d="M6.500 1v11M1 6.500h11" stroke="#666" stroke-width="1.300"/></svg>
          <svg class="st-chev" width="10" height="10"><use href="#chev"/></svg>
          <svg class="st-cs" width="16" height="18" viewBox="0 0 16 18"><path d="M8 1v10M8 11l-6 5M8 11l6 5" stroke="#333" stroke-width="1.200"/><circle cx="8" cy="10" r="3" fill="#6bb8b0" stroke="#333" stroke-width=".6"/><path d="M5 8l-2 6M11 8l2 6" stroke="#555"/></svg>
          <span class="st-t">Global CS</span>
          <svg class="st-bell" width="14" height="18" viewBox="0 0 14 18"><path d="M1 14c2-1 2-3 2-7 0-3 2-5 4-5s4 2 4 5c0 4 0 6 2 7z" fill="none" stroke="#444"/><path d="M5 16.500h4" stroke="#444" stroke-width="1.500"/></svg>
          <span class="st-pct">30%</span>
          <div class="batt"><i class="batt-lvl"></i></div>
        </div>
      </div>
    </div>
  </section>
</main>
<div class="strip"></div>
<script src="code.js"></script>
</body>
</html>
```

FILE: styles.css
```css
* { box-sizing: border-box; }
html, body { margin: 0; padding: 0; }
body { width: 1914px; height: 996px; overflow: hidden; background: #e8e8e8; font-family: "Liberation Sans", Arial, sans-serif; font-size: 13px; color: #333; }
.defs { position: absolute; }
svg { display: block; flex: none; }
i { display: block; }
h2, h3, ul { margin: 0; padding: 0; }

.topline { display: flex; height: 2px; }
.tl-a { width: 27px; background: #263238; }
.tl-b { width: 145px; background: #fff; }
.tl-c { flex: 1; background: #263238; }

.toolbar { height: 48px; display: flex; align-items: center; gap: 6px; padding-left: 3px; padding-right: 23px; }
.tb-btn { width: 36px; height: 36px; display: flex; align-items: center; justify-content: center; border-radius: 5px; }
.tb-btn.on { background: #b8b8b8; }
.gap-l { margin-left: 6px; }
.n1 { font: bold 13px "Liberation Sans", sans-serif; fill: #0a4fc0; }
.autorun { display: flex; align-items: center; gap: 4px; margin-left: 14px; font-family: Roboto, sans-serif; font-size: 12px; color: #263238; }
.run { margin-left: 6px; width: 104px; height: 30px; border-radius: 15px; background: #0ba084; color: #fff; display: flex; align-items: center; justify-content: center; font-family: Roboto, sans-serif; font-weight: 700; font-size: 12.5px; }
.tb-right { margin-left: auto; display: flex; align-items: center; }
.tb-group { display: flex; align-items: center; }
.g44 { gap: 20px; }
.g19 { gap: 19px; }
.g17 { gap: 17px; }
.play-group { margin-left: 31px; }
.slider { display: flex; align-items: center; width: 100px; margin-left: 26px; }
.sl-fill { width: 69px; height: 3px; background: #263238; }
.sl-knob { width: 11px; height: 14px; border-radius: 50%; background: #263238; }
.sl-rest { flex: 1; height: 1px; background: #c4c4c4; }
.alerts { margin-left: 27px; }
.warn { margin-left: 19px; }
.sys { margin-left: 26px; }

.main { display: flex; gap: 6px; height: 936px; padding-left: 1px; padding-right: 6px; }
.panel { background: #f4f4f4; border-radius: 10px; }
.left-col { width: 222px; display: flex; flex-direction: column; gap: 6px; }
.explorer { flex: 1; }
.title { font-family: Roboto, sans-serif; font-weight: 700; font-size: 15px; color: #263238; }
.title.small { font-size: 13.5px; }
.explorer-head { height: 48px; display: flex; align-items: center; padding: 0 16px 0 14px; }
.explorer-head .title { flex: 1; }
.folder { margin-left: 25px; }
.ex-list { list-style: none; }
.ex-list li { height: 32px; display: flex; align-items: center; gap: 6px; padding-left: 12px; font-size: 14.7px; color: #444; }
.side-card { height: 86px; padding: 0 17px 0 14px; }
.card-head { height: 49px; display: flex; align-items: center; justify-content: space-between; }
.card-val { margin-top: 2px; font-size: 13px; color: #333; line-height: 16px; }

.program { width: 318px; padding: 0 5px 6px 6px; display: flex; flex-direction: column; }
.prog-head { height: 48px; display: flex; align-items: center; position: relative; }
.prog-chev { margin-left: 7px; margin-right: 11px; }
.prog-head .title { flex: 1; }
.pi-1 { margin-right: 21px; }
.pi-2 { margin-right: 22px; }
.pi-3 { margin-right: 26px; }
.pi-4 { margin-right: 10px; }
.code-wrap { flex: 1; display: flex; min-height: 0; }
.code { width: 291px; background: #fff; overflow: hidden; }
.code-track { flex: 1; background: #efefef; padding: 17px 0 0 7px; }
.code-thumb { width: 2px; height: 42px; background: #9a9a9a; }
.ln { height: 16px; display: flex; position: relative; padding-left: 37px; padding-right: 1px; }
.ln code { flex: 1; font-family: "DejaVu Sans Mono", monospace; font-size: 11.7px; line-height: 18px; white-space: pre; color: #2060e0; }
.ln code .w { color: #a83050; }
.ln.hl code { background: #dcdcdc; }
.ln.dot::before { content: ""; position: absolute; left: 14px; top: 4px; width: 6px; height: 6px; border-radius: 50%; background: #0b8f74; }
.ln.bm::before { content: ""; position: absolute; left: 13px; top: 3px; width: 8px; height: 10px; background: #00c19a; border: 1px solid #0a6a5a; border-bottom: 0; clip-path: polygon(0 0, 100% 0, 100% 100%, 50% 75%, 0 100%); }

.setup { flex: 1; display: flex; margin-left: 1px; padding: 6px 5px 6px 0; min-width: 0; }
.rail { width: 44px; display: flex; flex-direction: column; align-items: center; }
.rail-tab { writing-mode: vertical-rl; transform: rotate(180deg); font-size: 14px; color: #263238; display: flex; align-items: center; justify-content: center; width: 32px; height: 81px; letter-spacing: .2px; }
.rail-tab:first-child { height: 84px; }
.rail-tab.active { background: #263238; color: #fff; border-radius: 6px; }
.rail-icons { margin-top: 85px; display: flex; flex-direction: column; gap: 4px; }
.rail-ic { width: 36px; height: 36px; display: flex; align-items: center; justify-content: center; border-radius: 5px; }
.rail-ic.on { background: #b8b8b8; }
.work { flex: 1; display: flex; background: #fff; border-radius: 0 8px 8px 0; min-width: 0; }
.form-col { width: 275px; flex: none; }
.form-head { height: 48px; display: flex; align-items: center; padding-left: 13px; }
.setup-t { font-family: Roboto, sans-serif; font-size: 14.5px; }
.newop { margin-left: 98px; font-size: 13px; color: #333; }
.caret { margin-left: 12px; border-left: 4px solid transparent; border-right: 4px solid transparent; border-top: 4px solid #263238; }
.tree-box { background: #efefef; }
.tree-body { display: flex; height: 184px; }
.tree { width: 258px; background: #fff; overflow: hidden; font-size: 12.5px; }
.v-track { flex: 1; padding: 18px 0 0 8px; }
.v-thumb { width: 2px; height: 108px; background: #9a9a9a; }
.h-track { height: 17px; padding: 8px 0 0 17px; }
.h-thumb { width: 158px; height: 2px; background: #8a8a8a; }
.t-row { display: flex; align-items: center; color: #333; }
.machine { height: 22px; padding-left: 12px; gap: 7px; }
.part { height: 23px; padding-left: 13px; }
.part svg:nth-child(2) { margin-left: 7px; }
.p-name { margin-left: 9px; width: 60px; }
.op { display: grid; grid-template-columns: 99px 48px 48px 57px; column-gap: 2px; height: 23px; }
.op .c { line-height: 23px; padding-left: 13px; white-space: nowrap; overflow: hidden; color: #333; }
.c-name { display: flex; align-items: center; gap: 6px; padding-left: 46px; color: #333; }
.op.sel > div { background: #e4e4e4; }
.op .teal { color: #1a9a96; }
.op .gray { color: #999; }
.props-t { height: 52px; line-height: 46px; padding-left: 13px; margin: 0; }
.props { margin-left: 16px; width: 251px; }
.p-row { display: grid; grid-template-columns: 123px 128px; height: 21px; align-items: center; }
.p-row.sel-row { background: #e4e4e4; height: 18px; border-radius: 3px; margin-bottom: 2px; column-gap: 0; }
.p-row.sel-row .p-n { height: 18px; border-right: 1px solid #f6f6f6; }
.p-n { display: flex; align-items: center; overflow: hidden; white-space: nowrap; }
.p-n span { flex: none; }
.head .p-n { padding-left: 6px; font-weight: 700; color: #555; }
.head .p-ic { margin-left: 3px; margin-right: 2px; }
.child .p-n { padding-left: 37px; color: #444; }
.child .p-ic { margin-right: 2px; }
.child.rot .p-ic { margin-right: 0; }
.child.wp .p-ic { margin-right: 4px; }
.p-v { padding-left: 5px; color: #666; }
.p-v.teal { color: #1a9a96; }
.sp { margin-top: 8px; }
.axes .p-n { padding-left: 19px; }
.axes .p-ic { margin-left: 1px; margin-right: 2px; }

.viewport { flex: 1; position: relative; min-width: 0; overflow: hidden; }
.scene { position: absolute; left: 0; top: 0; }
.op-g { font: bold 9px "Liberation Sans", sans-serif; fill: #e00000; }
.g54 { font: 12px "Liberation Sans", sans-serif; fill: #555; }
.axis-z { font: 500 15px Roboto, sans-serif; fill: #1a50e0; }
.axis-x { font: 400 16px Roboto, sans-serif; fill: #e01860; }
.cube-t { font: 12px "Liberation Sans", sans-serif; fill: #222; text-anchor: middle; }

.right-rail { position: absolute; top: 6px; right: 6px; width: 36px; display: flex; flex-direction: column; gap: 6px; }
.ri { width: 36px; height: 36px; display: flex; align-items: center; justify-content: center; border-radius: 5px; }
.ri.on { background: #b8b8b8; }
.ri.group { margin-top: 22px; }
.ri.group2 { margin-top: 21px; }
.st-none { fill: none; }
.st-metal { fill: url(#gMetal); }
.st-teal { fill: url(#gTeal); }
.wv-lines path { fill: none; stroke: #444; stroke-width: 1.1; }
.wv-teal { fill: #3ecfc4; stroke: #333; }
.wv-edge { fill: #ececec; stroke: #14bdb0; }

.status { position: absolute; right: 11px; bottom: 5px; display: flex; align-items: center; height: 26px; font-size: 12.5px; color: #333; }
.st-chev { margin-left: 25px; }
.st-cs { margin-left: 22px; }
.st-t { margin-left: 5px; width: 62px; white-space: nowrap; }
.st-bell { margin-left: 38px; }
.st-pct { margin-left: 26px; color: #000; }
.batt { margin-left: 5px; width: 9px; height: 25px; border: 2px solid #4aa8a0; border-radius: 2px; background: #eef7f6; display: flex; align-items: flex-end; }
.batt-lvl { width: 100%; height: 7px; background: #4aa8a0; }

.strip { margin-top: 6px; height: 4px; background: #e2ebf7; border-top: 1px solid #b4c0d4; }
```

FILE: code.js
```js
document.querySelectorAll('#code code').forEach(function (el) {
  var text = el.textContent;
  el.innerHTML = text.replace(/[A-Z()%_]+/g, function (m) {
    return '<span class="w">' + m + '</span>';
  });
});
```
